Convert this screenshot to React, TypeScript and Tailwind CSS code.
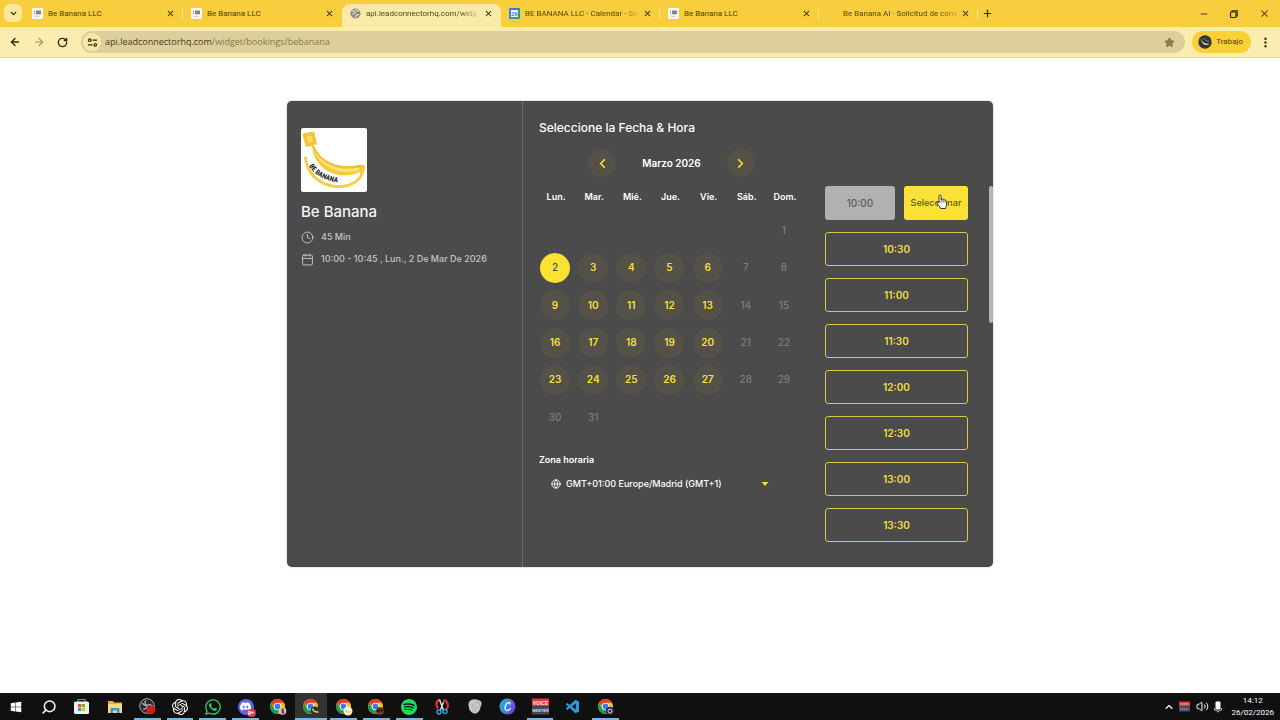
import { Fragment, useState } from "react";
import type { ReactNode } from "react";
import {
  ArrowLeft,
  ArrowRight,
  Calendar,
  ChevronDown,
  ChevronLeft,
  ChevronRight,
  ChevronUp,
  Clock,
  EllipsisVertical,
  Globe,
  Minus,
  Plus,
  RotateCw,
  Search,
  Star,
  Volume2,
  X,
} from "lucide-react";
import { FaWhatsapp, FaWindows } from "react-icons/fa";
import { SiDiscord, SiOpenai, SiSpotify } from "react-icons/si";
import { VscVscode } from "react-icons/vsc";

type Tab = { title: string; icon: ReactNode; active?: boolean; long?: boolean };

function DocIcon() {
  return (
    <svg viewBox="0 0 11 11" className="size-[11px] shrink-0">
      <rect width="11" height="11" rx="1" fill="#fbf8ee" />
      <rect x="4" y="2.6" width="5" height="3.6" fill="#77737f" />
      <path d="M2.500 2.500v4" stroke="#b0adb2" strokeWidth="1" />
      <path d="M4 4.400h5" stroke="#a9a6af" strokeWidth="0.600" />
      <path d="M2.500 8.300h5" stroke="#c9c6c4" strokeWidth="0.900" />
    </svg>
  );
}

function SiteIcon() {
  return (
    <svg viewBox="0 0 11 11" className="size-[11px] shrink-0">
      <circle cx="5.5" cy="5.5" r="5" fill="#8b8a80" />
      <path d="M2 3.5C3.5 2 5 3 5.4 4.4 5 5.8 3 5.2 2.4 6.4M6 1.2c.5 1.8 2 1.4 3 2.2M5.5 9.5c-.4-2 1-3 3.6-2.8" fill="none" stroke="#e8e2bd" strokeWidth="1.2" />
    </svg>
  );
}

function CalendarTabIcon() {
  return (
    <svg viewBox="0 0 11 11" className="size-[11px] shrink-0">
      <rect width="11" height="11" rx="1" fill="#3f7fdc" />
      <path d="M9 0h1a1 1 0 0 1 1 1v8H9z" fill="#2f9d66" />
      <path d="M0 9h9v2H1a1 1 0 0 1-1-1z" fill="#37a366" />
      <path d="M9 9h2l-2 2z" fill="#d9534a" />
      <rect x="2" y="2" width="7" height="7" fill="#eef3fb" />
      <text x="5.5" y="7.6" textAnchor="middle" fontSize="5.5" fontFamily="Roboto, sans-serif" fontWeight="700" fill="#3f7fdc">26</text>
    </svg>
  );
}

const tabs: Tab[] = [
  { title: "Be Banana LLC", icon: <DocIcon /> },
  { title: "Be Banana LLC", icon: <DocIcon /> },
  { title: "api.leadconnectorhq.com/widg", icon: <SiteIcon />, active: true, long: true },
  { title: "BE BANANA LLC - Calendar - Se", icon: <CalendarTabIcon />, long: true },
  { title: "Be Banana LLC", icon: <DocIcon /> },
  { title: "Be Banana AI · Solicitud de cons", icon: <span className="w-[11px] shrink-0" />, long: true },
];

function BrowserTab({ tab, divider }: { tab: Tab; divider: boolean }) {
  return (
    <div
      className={
        tab.active
          ? "relative flex w-[159px] items-center self-stretch rounded-t-lg bg-[#f9eaaa] px-2 pb-1"
          : "relative flex w-[159px] items-center self-stretch px-2 pb-1"
      }
    >
      {tab.icon}
      <button
        type="button"
        className={
          tab.long
            ? "ml-[5px] bg-linear-to-r from-[#4c3f12] from-85% to-[#4c3f12]/20 bg-clip-text text-left text-[8px] leading-3 whitespace-nowrap text-transparent"
            : "ml-[5px] text-left text-[8px] leading-3 whitespace-nowrap text-[#4c3f12]"
        }
      >
        {tab.title}
      </button>
      <button type="button" aria-label="Cerrar pestaña" className="ml-auto flex shrink-0">
        <X className="size-[9px] text-[#2c250c]" strokeWidth={2.800} />
      </button>
      {divider && <span className="absolute top-[5px] right-0 h-2.5 w-px bg-[#fae795]" />}
    </div>
  );
}

function BrowserChrome() {
  return (
    <header className="font-['Roboto','Noto_Sans',sans-serif]">
      <div className="flex h-[27px] items-stretch bg-[#f8ce3e] pl-1">
        <button type="button" aria-label="Buscar pestañas" className="mt-1 mr-0.5 flex size-[18px] items-center justify-center rounded-md bg-[#fbe896]">
          <ChevronDown className="size-[9px] text-[#33290a]" strokeWidth={3.5} />
        </button>
        <nav className="flex min-w-0 pt-1">
          {tabs.map((tab, i) => (
            <BrowserTab key={i} tab={tab} divider={i !== 1 && i !== 2} />
          ))}
        </nav>
        <button type="button" aria-label="Nueva pestaña" className="ml-1 flex items-center">
          <Plus className="size-[11px] text-[#33290a]" strokeWidth={2.5} />
        </button>
        <div className="ml-auto flex items-center gap-5 pr-2.5 text-[#33290a]">
          <button type="button" aria-label="Minimizar"><Minus className="size-[10px]" strokeWidth={2} /></button>
          <button type="button" aria-label="Restaurar">
            <svg viewBox="0 0 10 10" className="size-[10px]" fill="none" stroke="currentColor" strokeWidth="1.2">
              <rect x="1.5" y="3" width="5.5" height="5.5" rx="0.8" />
              <path d="M3 3V1.8h5.2V7H7" />
            </svg>
          </button>
          <button type="button" aria-label="Cerrar"><X className="size-[11px]" strokeWidth={2.2} /></button>
        </div>
      </div>
      <div className="flex h-[31px] items-center border-b border-[#e3d7a2] bg-[#fbedb0] pr-2 pl-[9px]">
        <div className="flex items-center gap-3 text-[#33290a]">
          <button type="button" aria-label="Atrás"><ArrowLeft className="size-3" strokeWidth={2.8} /></button>
          <button type="button" aria-label="Adelante"><ArrowRight className="size-3 text-[#a3975f]" strokeWidth={2.2} /></button>
          <button type="button" aria-label="Recargar"><RotateCw className="size-[11px]" strokeWidth={3} /></button>
        </div>
        <div className="ml-[13px] flex h-[22px] min-w-0 flex-1 items-center rounded-full bg-[#dccf9c] pr-2.5 pl-0.5">
          <button type="button" aria-label="Información del sitio" className="flex size-[18px] items-center justify-center rounded-full bg-[#f6e8ac]">
            <svg viewBox="0 0 12 12" className="size-[11px]" fill="none" stroke="#33290a" strokeWidth="1.3">
              <circle cx="3" cy="3.5" r="1.4" />
              <path d="M6 3.5h5M1 8.5h5" />
              <circle cx="9" cy="8.5" r="1.4" />
            </svg>
          </button>
          <p className="ml-1 flex-1 font-['Open_Sans','Noto_Sans',sans-serif] text-[9px] leading-3 text-[#857a4e]">
            <span className="text-[#463c18]">api.leadconnectorhq.com</span>/widget/bookings/bebanana
          </p>
          <button type="button" aria-label="Marcador"><Star className="size-[11px] fill-[#8a7d45] text-[#8a7d45]" /></button>
        </div>
        <button type="button" className="ml-[7px] flex h-[22px] items-center gap-1 rounded-full bg-[#f9d037] pr-2 pl-1.5 text-[8px] text-[#4c3f12]">
          <svg viewBox="0 0 14 14" className="size-[14px]">
            <circle cx="7" cy="7" r="6.7" fill="#30343c" />
            <path d="M3 3.4C4.2 7 7 9.2 11.5 8.7c-2.600 2.600-8 1.200-8.500-5.300z" fill="#f2d873" />
            <path d="M5.500 3c1 2 3 3.300 6 3.200" fill="none" stroke="#8190a9" strokeWidth="0.8" />
          </svg>
          Trabajo
        </button>
        <button type="button" aria-label="Menú" className="ml-2"><EllipsisVertical className="size-[13px] text-[#33290a]" strokeWidth={2.500} /></button>
      </div>
    </header>
  );
}

function BananaLogo() {
  return (
    <svg viewBox="0 0 66 64" className="h-16 w-[66px] rounded-xs bg-white" role="img" aria-label="Be Banana">
      <path d="M11 17C16 34 34 44 60 38c4-1 4 3 1 5C42 54 12 44 11 17z" fill="#f5cb3d" />
      <path d="M14 22c6 14 22 24 43 19" fill="none" stroke="#fbe37b" strokeWidth="3" strokeLinecap="round" />
      <path d="M12 18C18 33 36 43 58 38l4.500.2c.8 2-.5 5-2.500 7" fill="none" stroke="#efbe2d" strokeWidth="2" strokeLinecap="round" />
      <path d="M3.500 7l8.500-1.500 2 9.500-8 2z" fill="#f9dd6b" stroke="#f3c536" strokeWidth="3.500" strokeLinejoin="round" />
      <path d="M4.500 30C7 51 26 61 44 58c9-1.600 17-7 18-17" fill="none" stroke="#f5cd45" strokeWidth="2.800" strokeLinecap="round" />
      <path id="logo-arc" d="M8 38Q18 54 44 55" fill="none" />
      <text fontFamily="'Liberation Sans Narrow','Roboto Condensed','Open Sans Condensed','DejaVu Sans Condensed',sans-serif" fontWeight="700" fontSize="7" fill="#161616">
        <textPath href="#logo-arc">BE BANANA</textPath>
      </text>
    </svg>
  );
}

function EventDetails() {
  return (
    <aside className="w-[236px] border-r border-[#6b6b6b] px-3.5 pt-[27px]">
      <BananaLogo />
      <h1 className="mt-2.5 text-[15px] leading-5 font-medium text-[#f5f5f5]">Be Banana</h1>
      <ul className="mt-2 flex flex-col gap-2 text-[9px] leading-[14px] font-medium text-[#c3c3c3]">
        <li className="flex items-center gap-[7px]">
          <Clock className="size-[13px]" strokeWidth={1.8} />
          45 Min
        </li>
        <li className="flex items-center gap-[7px]">
          <Calendar className="size-[13px]" strokeWidth={1.8} />
          10:00 - 10:45 , Lun., 2 De Mar De 2026
        </li>
      </ul>
    </aside>
  );
}

const weekdays = ["Lun.", "Mar.", "Mié.", "Jue.", "Vie.", "Sáb.", "Dom."];
const weeks = Array.from({ length: 6 }, (_, w) =>
  Array.from({ length: 7 }, (_, d) => {
    const day = w * 7 + d - 5;
    return day >= 1 && day <= 31 ? day : null;
  }),
);

function MonthCalendar() {
  const [selected, setSelected] = useState(2);
  return (
    <section className="w-[267px]">
      <div className="flex items-center justify-center gap-[26px] pl-0.5">
        <button type="button" aria-label="Mes anterior" className="flex size-7 items-center justify-center rounded-full bg-[#545247] text-[#f8e03c]">
          <ChevronLeft className="size-[15px]" strokeWidth={2.800} />
        </button>
        <h3 className="text-[10px] leading-4 font-semibold text-white">Marzo 2026</h3>
        <button type="button" aria-label="Mes siguiente" className="flex size-7 items-center justify-center rounded-full bg-[#545247] text-[#f8e03c]">
          <ChevronRight className="size-[15px]" strokeWidth={2.800} />
        </button>
      </div>
      <table className="mt-2.5 h-[249px] w-full table-fixed border-collapse">
        <thead>
          <tr>
            {weekdays.map((name) => (
              <th key={name} scope="col" className="h-[25px] p-0 text-center align-top text-[9px] leading-5 font-semibold text-white">{name}</th>
            ))}
          </tr>
        </thead>
        <tbody>
          {weeks.map((week, w) => (
            <tr key={w} className="h-[37px]">
              {week.map((day, d) => {
                const open = day !== null && d < 5 && day < 28;
                return (
                  <td key={d} className="p-0 pr-0.5">
                    {day !== null && (
                      <button
                        type="button"
                        disabled={!open}
                        onClick={() => setSelected(day)}
                        className={
                          day === selected
                            ? "mx-auto flex size-[30px] items-center justify-center rounded-full bg-[#fae232] text-[10px] font-medium text-[#4b4b4b]"
                            : open
                              ? "mx-auto flex size-[30px] items-center justify-center rounded-full bg-[#545248] text-[10px] font-semibold text-[#f5df45]"
                              : "mx-auto flex size-[30px] items-center justify-center rounded-full text-[10px] font-medium text-[#7b7b7b]"
                        }
                      >
                        {day}
                      </button>
                    )}
                  </td>
                );
              })}
            </tr>
          ))}
        </tbody>
      </table>
      <div className="mt-[18px] pl-0.5">
        <label htmlFor="timezone" className="block text-[9px] leading-3 font-semibold text-white">Zona horaria</label>
        <div className="mt-2 flex items-center pl-3">
          <Globe className="size-[10px] text-white" strokeWidth={2} />
          <select id="timezone" className="ml-[5px] h-5 w-[195px] appearance-none bg-transparent text-[9px] font-medium text-white">
            <option>GMT+01:00 Europe/Madrid (GMT+1)</option>
          </select>
          <svg viewBox="0 0 8 4" className="h-1 w-2"><path d="M.5 0h7L4 4z" fill="#f8e03c" /></svg>
        </div>
      </div>
    </section>
  );
}

function HandCursor() {
  return (
    <svg viewBox="0 0 12 16" className="pointer-events-none absolute top-2 left-8 h-4 w-3">
      <path
        d="M3 9V2.200a1.100 1.100 0 0 1 2.200 0V6l.3-.8c.7-.5 1.500-.2 1.700.5.700-.4 1.500-.1 1.700.6.800-.3 1.600.1 1.700 1V10c0 2-.8 2.500-1 4.500H4.600C4 12.500 2 11 1 9c-.4-1.200 1-1.600 2 0z"
        fill="#fff" stroke="#222" strokeWidth="0.900" strokeLinejoin="round"
      />
      <path d="M5.200 6v2.500M7.200 6v2.500M9 6.500v2" stroke="#222" strokeWidth="0.700" />
    </svg>
  );
}

const slots = ["10:30", "11:00", "11:30", "12:00", "12:30", "13:00", "13:30"];

function TimeSlots() {
  return (
    <section className="flex flex-1 items-start justify-between pt-[37px] pl-[21px]">
      <div className="grid w-[143px] gap-3">
        <div className="flex gap-[9px]">
          <button type="button" className="h-[34px] w-[70px] rounded-[3px] bg-[#b1b1b1] text-[10px] font-medium text-[#5d5d5d]">10:00</button>
          <button type="button" className="relative h-[34px] flex-1 rounded-[3px] bg-[#fae136] text-[9px] font-medium text-[#5c5630]">
            Seleccionar
            <HandCursor />
          </button>
        </div>
        {slots.map((time) => (
          <button key={time} type="button" className="h-[34px] rounded-[3px] border border-[#d9c849] text-[10px] font-semibold text-[#f3dd45]">
            {time}
          </button>
        ))}
      </div>
      <div className="h-[137px] w-1 rounded-full bg-[#b5b5b5]" />
    </section>
  );
}

function BookingCard() {
  return (
    <div className="mx-auto flex w-full max-w-[706px] items-stretch overflow-hidden rounded-[5px] bg-[#4b4b4b] font-['Inter',sans-serif] shadow-[0_0_2px_rgba(0,0,0,0.35)]">
      <EventDetails />
      <div className="flex-1 pt-[18px] pb-[25px] pl-3.5">
        <h2 className="pl-0.5 text-[12px] leading-[18px] font-medium text-white">Seleccione la Fecha &amp; Hora</h2>
        <div className="mt-3 flex">
          <MonthCalendar />
          <TimeSlots />
        </div>
      </div>
    </div>
  );
}

function ChromeLogo({ badge }: { badge?: ReactNode }) {
  return (
    <svg viewBox="0 0 18 18" className="size-[18px]">
      <circle cx="8.500" cy="8.500" r="7.500" fill="#fbc116" />
      <path d="M2 4.750a7.500 7.500 0 0 0 6.500 11.250L11.500 10.500 5.500 10.500z" fill="#229a4e" />
      <path d="M2 4.750A7.500 7.500 0 0 1 15 4.750H8.500L5 8z" fill="#e33b2e" />
      <circle cx="8.500" cy="8.500" r="3.800" fill="#fff" />
      <circle cx="8.500" cy="8.500" r="2.900" fill="#3a7de8" />
      {badge}
    </svg>
  );
}

function VoiceMeeterIcon({ className }: { className: string }) {
  return (
    <svg viewBox="0 0 17 17" className={className}>
      <rect y="0.500" width="17" height="8" fill="#d83a35" />
      <rect y="8.500" width="17" height="8" fill="#3f4a5c" />
      <text x="8.500" y="6.500" textAnchor="middle" fontSize="5" fontWeight="700" fontFamily="Liberation Sans, sans-serif" fill="#ffe6e2">VOICE</text>
      <text x="8.500" y="14" textAnchor="middle" fontSize="4" fontWeight="700" fontFamily="Liberation Sans, sans-serif" fill="#d5dbe3">MEETER</text>
    </svg>
  );
}

type TaskItem = { name: string; icon: ReactNode; open?: boolean; focused?: boolean };

const taskItems: TaskItem[] = [
  { name: "Inicio", icon: <FaWindows className="size-3 text-white" /> },
  { name: "Buscar", icon: <Search className="size-4 -scale-x-100 text-white" strokeWidth={2.200} /> },
  {
    name: "Microsoft Store",
    icon: (
      <svg viewBox="0 0 17 17" className="size-[17px]">
        <path d="M5 4V1.500h7V4" fill="none" stroke="#3ba4dc" strokeWidth="1.200" />
        <rect x="1" y="3.500" width="15" height="12.500" rx="1.500" fill="#eef3f5" />
        <path d="M5 6h3.200v3.200H5z" fill="#e8502c" />
        <path d="M8.800 6H12v3.200H8.800z" fill="#72b232" />
        <path d="M5 9.800h3.200V13H5z" fill="#229fdc" />
        <path d="M8.800 9.800H12V13H8.800z" fill="#f4b51f" />
      </svg>
    ),
  },
  {
    name: "Explorador de archivos",
    icon: (
      <svg viewBox="0 0 16 14" className="h-[14px] w-4">
        <path d="M1 1h5l1 1.500h8V12H1z" fill="#e6b23c" />
        <path d="M1 4h14v9H1z" fill="#fadb7c" />
        <path d="M3.500 8h9v5h-2.500v-2.500H6V13H3.500z" fill="#3f93cf" />
      </svg>
    ),
  },
  {
    name: "OBS Studio",
    open: true,
    icon: (
      <svg viewBox="0 0 17 17" className="size-[17px]">
        <circle cx="8" cy="8" r="7.300" fill="#2a272b" stroke="#b9b9bb" strokeWidth="0.900" />
        <path d="M7 2.500c-2 1.500-1 4 1 5 .5 2-1 4-4 3.500M8 7.500c2-1.500 4-1 5.500 1M3 5c1.500 2 3 2.500 5 2.500" fill="none" stroke="#a8a8ab" strokeWidth="1.300" />
        <circle cx="12" cy="12" r="4.300" fill="#e3151b" />
      </svg>
    ),
  },
  { name: "ChatGPT", open: true, icon: <SiOpenai className="size-4 text-white" /> },
  { name: "WhatsApp", open: true, icon: <FaWhatsapp className="size-[18px] text-[#2fd366]" /> },
  {
    name: "Discord",
    open: true,
    icon: (
      <span className="relative flex size-4 items-center justify-center rounded-full bg-[#5a66e8]">
        <SiDiscord className="size-[11px] text-white" />
        <span className="absolute -right-0.5 -bottom-0.5 rounded-full bg-[#d83a4e] px-px font-sans text-[6px] leading-[8px] font-bold text-white">9+</span>
      </span>
    ),
  },
  { name: "Chrome", icon: <ChromeLogo badge={<Fragment><circle cx="13.500" cy="13" r="3.800" fill="#e2c5b4" /><path d="M12.500 10.500h2l1 5h-3z" fill="#7d3f35" /></Fragment>} /> },
  { name: "Chrome Trabajo", open: true, focused: true, icon: <ChromeLogo badge={<Fragment><circle cx="13" cy="13" r="4.500" fill="#2f333a" /><path d="M10.500 10.500q1 4 6 3.500" fill="none" stroke="#edc84f" strokeWidth="1.400" /></Fragment>} /> },
  { name: "Chrome Banana", open: true, icon: <ChromeLogo badge={<Fragment><circle cx="13" cy="13" r="4.500" fill="#f6f2d8" /><path d="M10.500 11.500q1 4 5.500 2" fill="none" stroke="#e4cf77" strokeWidth="1.400" /></Fragment>} /> },
  { name: "Chrome Personal", open: true, icon: <ChromeLogo badge={<Fragment><circle cx="13" cy="13" r="4" fill="#6b3c22" /><path d="M10 14l2-2 2 1 2-2" fill="none" stroke="#2a1710" strokeWidth="1.500" /></Fragment>} /> },
  { name: "Spotify", open: true, icon: <SiSpotify className="size-4 text-[#25d865]" /> },
  {
    name: "Recortes",
    icon: (
      <svg viewBox="0 0 16 18" className="h-[18px] w-4" fill="none">
        <path d="M5.500 1.500c-3.500 2-4 6-1.500 9" stroke="#d8402f" strokeWidth="2.200" />
        <path d="M9.500 2c4.500 1 5.500 6 3 9.500" stroke="#c53b2b" strokeWidth="2.400" />
        <path d="M5.500 1.500l4 11M9.500 4 6.500 12" stroke="#dce5ec" strokeWidth="1.400" />
        <circle cx="5" cy="14" r="2" stroke="#3c9ee0" strokeWidth="1.400" />
        <circle cx="11" cy="13.500" r="2" stroke="#3c9ee0" strokeWidth="1.400" />
      </svg>
    ),
  },
  {
    name: "Asistente",
    icon: (
      <svg viewBox="0 0 16 17" className="h-[17px] w-4">
        <path d="M2 4c2-3 6-3.500 9-2 4 .5 4.500 4 2.500 7-.5 4-3 6.500-5.500 6.500S2.500 13 2 10s-.8-4 0-6z" fill="#c4c7c8" />
        <path d="M9 4q4-1 4 4M5 6q2 1 1 4M8 10q2 1 3-1M5 13q2-1 4 0" fill="none" stroke="#9b9fa1" strokeWidth="0.800" />
      </svg>
    ),
  },
  {
    name: "Canva",
    icon: (
      <svg viewBox="0 0 17 17" className="size-[17px]">
        <defs>
          <linearGradient id="canva-fill" x1="0" y1="0.300" x2="1" y2="0.800">
            <stop offset="0" stopColor="#21b8d6" />
            <stop offset="0.500" stopColor="#3e7be8" />
            <stop offset="1" stopColor="#7a33e6" />
          </linearGradient>
        </defs>
        <circle cx="8.500" cy="8.500" r="8" fill="url(#canva-fill)" />
        <path d="M11 6.200c.6-2-2-2.400-3.500-.4-2 2.700-1.800 6.400.3 6.800 1.500.2 2.700-.8 3.400-2.100" fill="none" stroke="#fff" strokeWidth="1.300" strokeLinecap="round" />
      </svg>
    ),
  },
  { name: "VoiceMeeter", open: true, icon: <VoiceMeeterIcon className="size-[17px]" /> },
  { name: "Visual Studio Code", icon: <VscVscode className="size-4 text-[#2b9be0]" /> },
  { name: "Chrome Estudio", open: true, icon: <ChromeLogo badge={<Fragment><circle cx="13" cy="13" r="4.300" fill="#2b2a45" /><circle cx="13" cy="13" r="2" fill="none" stroke="#d7d3ea" strokeWidth="1" /></Fragment>} /> },
];

function Taskbar() {
  return (
    <footer className="flex h-[27px] items-stretch bg-[#101010] font-['Roboto','Noto_Sans',sans-serif] text-white">
      <div className="flex w-[622px]">
        {taskItems.map((item) => (
          <button
            key={item.name}
            type="button"
            aria-label={item.name}
            className={
              item.focused
                ? "relative flex flex-1 items-center justify-center bg-[#333333]"
                : "relative flex flex-1 items-center justify-center"
            }
          >
            {item.icon}
            {item.open && (
              <span className={item.focused ? "absolute inset-x-0 bottom-0 h-0.5 bg-[#7cb4dc]" : "absolute inset-x-[3px] bottom-0 h-0.5 bg-[#7cb4dc]"} />
            )}
          </button>
        ))}
      </div>
      <div className="ml-auto flex items-center gap-1 pr-1.5">
        <ChevronUp className="size-3" strokeWidth={2.200} />
        <svg viewBox="0 0 11 11" className="size-[11px]">
          <path d="M0 .5h11v5H0z" fill="#d83a35" />
          <path d="M0 5.500h11v5H0z" fill="#3f5068" />
          <path d="M1.500 3h8" stroke="#f3aaa6" strokeWidth="1.400" strokeDasharray="1.200 .5" />
          <path d="M1.500 8h8" stroke="#9fb0c4" strokeWidth="1.200" strokeDasharray="1.200 .4" />
        </svg>
        <Volume2 className="ml-0.5 size-[13px]" strokeWidth={1.800} />
        <svg viewBox="0 0 10 12" className="h-3 w-2.5">
          <rect x="2.500" y="0.500" width="5" height="8" rx="1" fill="#fff" />
          <path d="M1.500 7v2q3.500 2.500 7 0V7M5 10v1.500" fill="none" stroke="#bbb" strokeWidth="1" />
        </svg>
        <div className="ml-1 text-center text-[8px] leading-3 whitespace-nowrap">
          <p>14:12</p>
          <p>26/02/2026</p>
        </div>
      </div>
    </footer>
  );
}

export default function App() {
  return (
    <div className="flex min-h-screen flex-col bg-white">
      <BrowserChrome />
      <main className="flex-1 px-4 pt-[43px]">
        <BookingCard />
      </main>
      <Taskbar />
    </div>
  );
}
